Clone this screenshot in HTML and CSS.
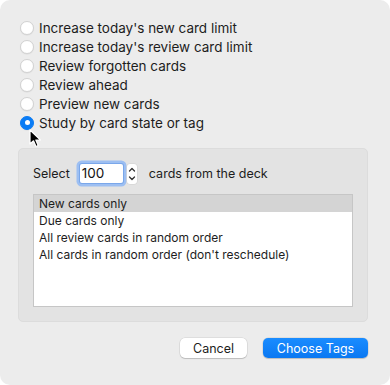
FILE: index.html
```html
<!DOCTYPE html>
<html lang="en">
<head>
    <meta charset="UTF-8">
    <title>Custom Study</title>
    <link rel="stylesheet" href="styles.css">
</head>
<body>
    <div class="window">
        <div class="options">
            <label class="radio-row"><span class="radio"></span>Increase today's new card limit</label>
            <label class="radio-row"><span class="radio"></span>Increase today's review card limit</label>
            <label class="radio-row"><span class="radio"></span>Review forgotten cards</label>
            <label class="radio-row"><span class="radio"></span>Review ahead</label>
            <label class="radio-row"><span class="radio"></span>Preview new cards</label>
            <label class="radio-row"><span class="radio checked"></span>Study by card state or tag</label>
        </div>
        <div class="group">
            <div class="select-row">
                <span class="label">Select</span>
                <div class="spin">
                    <div class="spin-input">100</div>
                    <div class="stepper">
                        <svg width="10" height="20" viewBox="0 0 10 20">
                            <path d="M2.5 7 L5 4.5 L7.5 7" fill="none" stroke="#333" stroke-width="1.3" stroke-linecap="round" stroke-linejoin="round"/>
                            <path d="M2.5 13 L5 15.5 L7.5 13" fill="none" stroke="#333" stroke-width="1.3" stroke-linecap="round" stroke-linejoin="round"/>
                        </svg>
                    </div>
                </div>
                <span class="after">cards from the deck</span>
            </div>
            <div class="list">
                <div class="list-item selected">New cards only</div>
                <div class="list-item">Due cards only</div>
                <div class="list-item">All review cards in random order</div>
                <div class="list-item">All cards in random order (don't reschedule)</div>
            </div>
        </div>
        <div class="buttons">
            <button class="btn">Cancel</button>
            <button class="btn primary">Choose Tags</button>
        </div>
        <svg class="cursor" width="14" height="20" viewBox="0 0 14 20">
            <path d="M1 1 L1 15 L4.5 11.8 L7 17.5 L9.2 16.5 L6.8 11 L11.5 11 Z" fill="#000" stroke="#fff" stroke-width="1.2" stroke-linejoin="round"/>
        </svg>
    </div>
</body>
</html>
```

FILE: styles.css
```css
body {
    margin: 0;
    background: #fff;
    font-family: Inter, "Liberation Sans", Arial, sans-serif;
    font-size: 13px;
    color: #1d1d1d;
}
.window {
    position: relative;
    width: 390px;
    height: 385px;
    box-sizing: border-box;
    background: #ececec;
    border-radius: 10px;
    padding: 18px 0 0 0;
}
.options {
    display: flex;
    flex-direction: column;
    padding-left: 20px;
    font-size: 13.5px;
}
.radio-row {
    display: flex;
    align-items: center;
    gap: 5px;
    height: 19px;
    white-space: nowrap;
}
.radio {
    width: 14px;
    height: 14px;
    box-sizing: border-box;
    border-radius: 50%;
    background: #fff;
    border: 1px solid #d2d2d2;
    box-shadow: 0 0.5px 1px rgba(0,0,0,0.08);
}
.radio.checked {
    background: #0a7cf5;
    border-color: #0a7cf5;
    display: flex;
    align-items: center;
    justify-content: center;
}
.radio.checked::after {
    content: "";
    width: 5px;
    height: 5px;
    border-radius: 50%;
    background: #fff;
}
.group {
    margin: 16px 0 0 18px;
    width: 350px;
    box-sizing: border-box;
    background: #e3e3e3;
    border: 1px solid #dcdcdc;
    border-radius: 5px;
    padding: 13px 14px 14px 14px;
}
.select-row {
    display: flex;
    align-items: center;
    height: 23px;
    font-size: 12.5px;
}
.spin {
    display: flex;
    align-items: center;
    margin-left: 10px;
}
.spin-input {
    width: 41px;
    height: 19px;
    line-height: 19px;
    background: #fff;
    padding-left: 2px;
    border-radius: 2px;
    box-shadow: 0 0 0 1px #7aa7ea, 0 0 0 3.5px #9dbff2;
    color: #111;
    font-size: 13.5px;
}
.stepper {
    margin-left: 4px;
    width: 10px;
    height: 20px;
    border-radius: 3px;
    background: #fff;
    box-shadow: 0 0 0 0.5px #cfcfcf;
}
.stepper svg {
    display: block;
}
.after {
    margin-left: 12px;
}
.list {
    margin-top: 9px;
    height: 113px;
    box-sizing: border-box;
    background: #fff;
    border: 1px solid #c6c6c6;
}
.list-item {
    height: 17px;
    line-height: 17px;
    padding-left: 5px;
    white-space: nowrap;
    font-size: 12px;
}
.list-item.selected {
    background: #d4d4d4;
}
.buttons {
    display: flex;
    justify-content: flex-end;
    gap: 16px;
    margin-top: 16px;
    padding-right: 22px;
}
.btn {
    font-family: inherit;
    font-size: 12.5px;
    height: 20px;
    padding: 0 12px;
    border: none;
    border-radius: 5px;
    background: #fff;
    color: #1d1d1d;
    box-shadow: 0 0 0 0.5px rgba(0,0,0,0.12), 0 1px 1px rgba(0,0,0,0.15);
    min-width: 67px;
}
.btn.primary {
    background: linear-gradient(#1a8cff, #0a78f2);
    color: #fff;
    min-width: 105px;
}
.cursor {
    position: absolute;
    left: 29px;
    top: 129px;
}
```
